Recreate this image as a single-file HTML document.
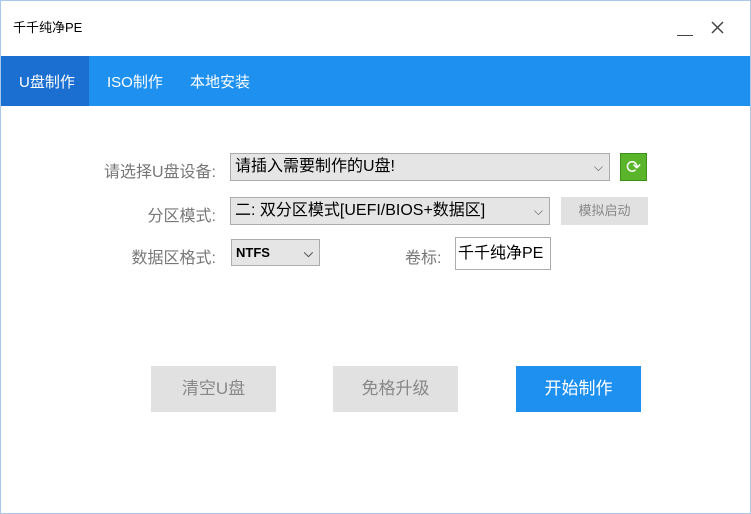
<!DOCTYPE html><html><head><meta charset="utf-8"><style>
body{margin:0;width:751px;height:514px;background:#fff;font-family:"Liberation Sans","Noto Sans CJK SC",sans-serif;position:relative;overflow:hidden}
.a{position:absolute}
.win{left:0;top:0;width:749px;height:512px;border:1px solid #a8c8ec}
.lbl{color:#777;font-size:16px;text-align:right;width:142px}
.sel{background:#e5e5e5;border:1px solid #acacac;box-sizing:border-box;font-size:16px;color:#000;padding-left:4px;line-height:26px}
.arr{position:absolute;right:6px;top:0;color:#555;font-size:12px}
.btn{background:#e1e1e1;color:#888;font-size:17px;text-align:center;line-height:46px}
</style></head><body>
<div class="a win"></div>
<div class="a" style="left:13px;top:17px;font-size:13px">千千纯净PE</div>
<div class="a" style="left:677px;top:35px;width:16px;height:1px;background:#444"></div>
<svg class="a" style="left:711px;top:21px" width="13" height="13"><path d="M1 1L12 12M12 1L1 12" stroke="#444" stroke-width="1.5"/></svg>
<div class="a" style="left:1px;top:56px;width:749px;height:50px;background:#1e90f0"></div>
<div class="a" style="left:1px;top:56px;width:88px;height:50px;background:#1a6fd0"></div>
<div class="a" style="left:19px;top:71px;color:#fff;font-size:15px">U盘制作</div>
<div class="a" style="left:107px;top:71px;color:#fff;font-size:15px">ISO制作</div>
<div class="a" style="left:190px;top:71px;color:#fff;font-size:15px">本地安装</div>
<div class="a lbl" style="left:74px;top:158px">请选择U盘设备:</div>
<div class="a sel" style="left:230px;top:153px;width:380px;height:28px">请插入需要制作的U盘!<span class="arr">⌵</span></div>
<div class="a" style="left:620px;top:153px;width:27px;height:28px;background:#5ab52a;border:1px solid #3e8e1a;box-sizing:border-box;color:#fff;text-align:center;font-size:18px;line-height:26px">⟳</div>
<div class="a lbl" style="left:74px;top:202px">分区模式:</div>
<div class="a sel" style="left:230px;top:197px;width:320px;height:28px">二: 双分区模式[UEFI/BIOS+数据区]<span class="arr">⌵</span></div>
<div class="a" style="left:561px;top:197px;width:87px;height:28px;background:#e1e1e1;color:#888;font-size:13px;text-align:center;line-height:28px">模拟启动</div>
<div class="a lbl" style="left:74px;top:244px">数据区格式:</div>
<div class="a sel" style="left:231px;top:239px;width:89px;height:27px;font-size:13px;font-weight:bold">NTFS<span class="arr">⌵</span></div>
<div class="a" style="left:405px;top:244px;color:#777;font-size:16px">卷标:</div>
<div class="a" style="left:455px;top:237px;width:96px;height:33px;border:1px solid #acacac;box-sizing:border-box;font-size:16px;line-height:31px;padding-left:2px">千千纯净PE</div>
<div class="a btn" style="left:151px;top:366px;width:125px;height:46px">清空U盘</div>
<div class="a btn" style="left:333px;top:366px;width:125px;height:46px">免格升级</div>
<div class="a btn" style="left:516px;top:366px;width:125px;height:46px;background:#1e90f0;color:#fff">开始制作</div>
</body></html>
